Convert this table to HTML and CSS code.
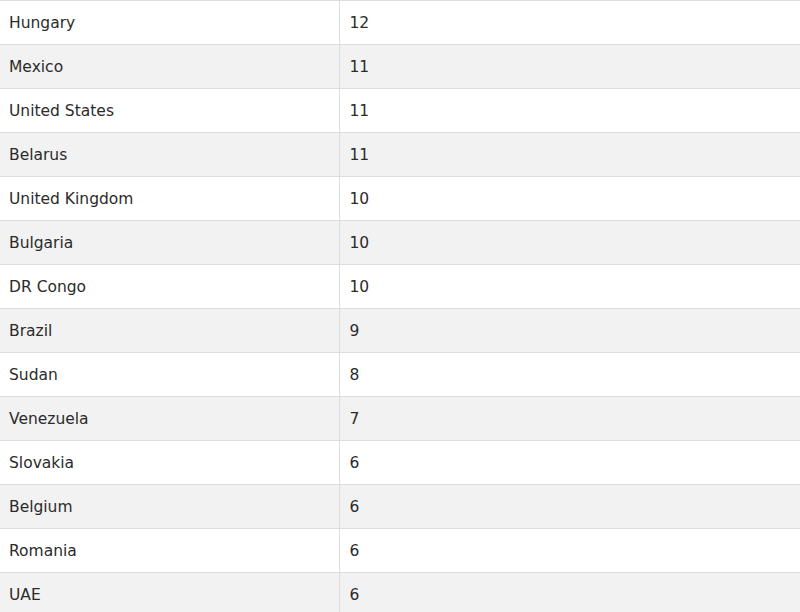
FILE: index.html
```
<!DOCTYPE html>
<html>
<head>
<meta charset="utf-8">
<link rel="stylesheet" href="styles.css">
</head>
<body>
<table class="data">
<tbody>
<tr><td class="name">Hungary</td><td class="val">12</td></tr>
<tr><td class="name">Mexico</td><td class="val">11</td></tr>
<tr><td class="name">United States</td><td class="val">11</td></tr>
<tr><td class="name">Belarus</td><td class="val">11</td></tr>
<tr><td class="name">United Kingdom</td><td class="val">10</td></tr>
<tr><td class="name">Bulgaria</td><td class="val">10</td></tr>
<tr><td class="name">DR Congo</td><td class="val">10</td></tr>
<tr><td class="name">Brazil</td><td class="val">9</td></tr>
<tr><td class="name">Sudan</td><td class="val">8</td></tr>
<tr><td class="name">Venezuela</td><td class="val">7</td></tr>
<tr><td class="name">Slovakia</td><td class="val">6</td></tr>
<tr><td class="name">Belgium</td><td class="val">6</td></tr>
<tr><td class="name">Romania</td><td class="val">6</td></tr>
<tr><td class="name">UAE</td><td class="val">6</td></tr>
</tbody>
</table>
</body>
</html>
```

FILE: styles.css
```
html, body {
  margin: 0;
  padding: 0;
  background: #fff;
}
body {
  font-family: "DejaVu Sans", Verdana, sans-serif;
  font-size: 15.5px;
  color: #2b2b2b;
}
.data {
  width: 800px;
  border-collapse: collapse;
}
.data td {
  height: 44px;
  padding: 1px 8px 0;
  border-top: 1px solid #ddd;
  vertical-align: middle;
  box-sizing: border-box;
}
.data tr:nth-child(even) td {
  background: #f2f2f2;
}
.data .name {
  width: 339px;
  box-sizing: border-box;
  border-right: 1px solid #ddd;
  padding-left: 9px;
}
.data .val {
  padding-left: 10px;
}
```
